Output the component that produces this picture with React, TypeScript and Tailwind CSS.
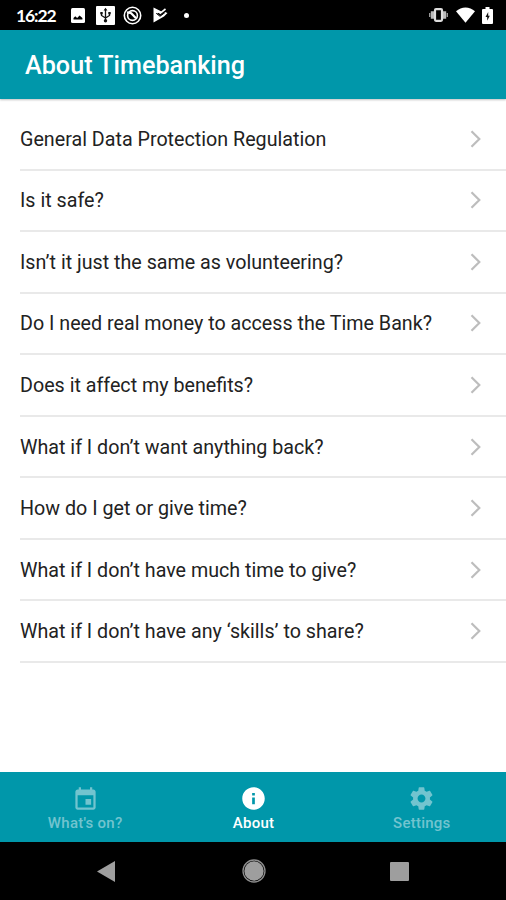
import React from 'react';

const questions = [
  'General Data Protection Regulation',
  'Is it safe?',
  'Isn’t it just the same as volunteering?',
  'Do I need real money to access the Time Bank?',
  'Does it affect my benefits?',
  'What if I don’t want anything back?',
  'How do I get or give time?',
  'What if I don’t have much time to give?',
  'What if I don’t have any ‘skills’ to share?',
];

const tabs = [
  {
    name: "What's on?",
    active: false,
    icon: 'M19 4h-1V2h-2v2H8V2H6v2H5c-1.1 0-2 .9-2 2v14c0 1.1.9 2 2 2h14c1.1 0 2-.9 2-2V6c0-1.1-.9-2-2-2zm0 16H5V9h14v11zM12 12.500h5v5h-5z',
  },
  {
    name: 'About',
    active: true,
    icon: 'M12 2C6.480 2 2 6.480 2 12s4.480 10 10 10 10-4.480 10-10S17.520 2 12 2zm1.200 15h-2.400v-6h2.400v6zm0-7.600h-2.400V7h2.400v2.400z',
  },
  {
    name: 'Settings',
    active: false,
    icon: 'M19.430 12.980c.04-.32.07-.64.07-.98s-.03-.66-.07-.98l2.110-1.650c.19-.15.24-.42.12-.64l-2-3.460c-.12-.22-.39-.3-.61-.22l-2.490 1c-.52-.4-1.080-.73-1.690-.98l-.38-2.650C14.460 2.180 14.250 2 14 2h-4c-.25 0-.46.18-.49.42l-.38 2.650c-.61.25-1.170.59-1.690.98l-2.490-1c-.23-.09-.49 0-.61.22l-2 3.460c-.13.22-.07.49.12.64l2.110 1.650c-.04.32-.07.65-.07.98s.03.66.07.98l-2.110 1.650c-.19.15-.24.42-.12.64l2 3.460c.12.22.39.3.61.22l2.490-1c.52.4 1.080.73 1.690.98l.38 2.650c.03.24.24.42.49.42h4c.25 0 .46-.18.49-.42l.38-2.650c.61-.25 1.170-.59 1.690-.98l2.490 1c.23.09.49 0 .61-.22l2-3.460c.12-.22.07-.49-.12-.64l-2.110-1.650zM12 15.500c-1.930 0-3.500-1.570-3.500-3.500s1.570-3.500 3.500-3.500 3.500 1.570 3.500 3.500-1.570 3.500-3.500 3.500z',
  },
];

const StatusBar = () => (
  <div className="flex h-[30px] shrink-0 items-center justify-between bg-black pr-[13px] pl-4 text-white">
    <div className="flex items-center">
      <span className="w-[55px] pt-px font-['Lato','Liberation_Sans',sans-serif] text-[17.500px] leading-5 font-bold tracking-[-1.100px]">16:22</span>
      {/* Picture */}
      <svg width="14" height="15" viewBox="0 0 14 15">
        <rect width="14" height="15" rx="1.500" fill="#fff" />
        <path d="M2.500 11.500v-1.500l1.800-1.800 1.800 1.800L8.600 7.500l2.800 2.500v1.500z" fill="#000" />
      </svg>
      {/* USB */}
      <svg className="ml-[11px]" width="19" height="19" viewBox="0 0 19 19">
        <rect width="19" height="19" rx="1" fill="#fff" />
        <path d="M9.500 3v11M5.500 7v2.500l4 2.500 4-2.500V7" fill="none" stroke="#111" strokeWidth="1.300" />
        <path d="M9.500 1.800l1.900 2.700H7.600zM4.300 6h2.400v2.200H4.300zM12.300 6h2.400v2.200h-2.400z" fill="#111" />
        <circle cx="9.500" cy="14.700" r="1.700" fill="#111" />
      </svg>
      {/* Do not track */}
      <svg className="ml-2" width="19" height="19" viewBox="0 0 19 19" fill="none" stroke="#fff">
        <circle cx="9.500" cy="9.500" r="8.200" strokeWidth="1.600" />
        <circle cx="9.500" cy="9.500" r="4.900" strokeWidth="1.600" />
        <path d="M4 6.200l4.200 1L13 12.300" strokeWidth="2.200" />
      </svg>
      {/* Play check */}
      <svg className="ml-[11px]" width="15" height="16" viewBox="0 0 15 16">
        <path d="M.5.500v15l10.500-6L14.500 6 12 5 7.300 9 4 6.500l5-1.800z" fill="#fff" />
        <path d="M5 4.200l2.300 1.900L12.500 2" fill="none" stroke="#fff" strokeWidth="1.600" />
        <path d="M3.200 6.300l3.800 3 5-3.800" fill="none" stroke="#000" strokeWidth="1" />
      </svg>
      <span className="ml-4 size-[5px] rounded-full bg-white"></span>
    </div>
    <div className="flex items-center gap-2">
      {/* Vibrate */}
      <svg width="19" height="14" viewBox="0 0 19 14">
        <path d="M.7 5v4M18.300 5v4" stroke="#999" strokeWidth="1.400" />
        <path d="M3.400 3.200v7.600M15.600 3.200v7.600" stroke="#bbb" strokeWidth="3.200" />
        <rect x="6" y="1.200" width="7" height="11.600" rx="1" fill="none" stroke="#ddd" strokeWidth="2.200" />
      </svg>
      <svg width="19" height="16" viewBox="0 0 19 16">
        <path d="M0 4.300C5.500-.8 13.500-.8 19 4.300L9.500 15.800z" fill="#fff" />
      </svg>
      <svg className="-ml-px" width="11" height="17" viewBox="0 0 11 17">
        <path d="M3.500 0h4v2H10a1 1 0 0 1 1 1v13a1 1 0 0 1-1 1H1a1 1 0 0 1-1-1V3a1 1 0 0 1 1-1h2.500z" fill="#fff" />
        <path d="M6.200 5L3.500 10h1.700v3.700L7.800 8.800H6.200z" fill="#111" />
      </svg>
    </div>
  </div>
);

const App = () => {
  return (
    <div className="flex h-[900px] w-[506px] flex-col overflow-hidden bg-white font-['Roboto',sans-serif]">
      <StatusBar />

      <header className="flex h-[69px] shrink-0 items-center bg-[#0097aa] px-[25px] pt-[3px] shadow-[0_1px_2px_rgba(0,0,0,0.25)]">
        <h1 className="text-[25.200px] leading-8 font-medium whitespace-nowrap text-white">About Timebanking</h1>
      </header>

      <main className="flex-1 pt-[10.200px]">
        <ul className="pl-5">
          {questions.map((question) => (
            <li key={question} className="flex h-[61.530px] items-center justify-between border-b-2 border-[#e9e9e9] pr-[25px]">
              <span className="pt-[2px] text-[19.700px] leading-7 whitespace-nowrap text-[#222]">{question}</span>
              <svg width="11" height="18" viewBox="0 0 11 18" fill="none" stroke="#bdbdbd" strokeWidth="2.200">
                <path d="M1.500 1.200L9.300 9l-7.800 7.800" />
              </svg>
            </li>
          ))}
        </ul>
      </main>

      {/* Tab bar */}
      <nav className="grid h-[70px] shrink-0 grid-cols-3 bg-[#0097aa] pl-px">
        {tabs.map((tab) => (
          <button
            key={tab.name}
            className={`flex flex-col items-center pt-[13px] ${tab.active ? 'text-white' : 'text-[#72c4cf]'}`}
          >
            <svg width="27" height="27" viewBox="0 0 24 24" fill="currentColor" fillRule="evenodd">
              <path d={tab.icon} />
            </svg>
            <span className="mt-px text-[15px] leading-5 font-medium tracking-[0.250px]">{tab.name}</span>
          </button>
        ))}
      </nav>

      {/* System navigation */}
      <div className="flex h-[58px] shrink-0 items-center justify-between bg-black px-[97px]">
        <svg width="18" height="21" viewBox="0 0 18 21">
          <path d="M18 0v21L0 10.500z" fill="#9e9e9e" />
        </svg>
        <svg className="ml-0.5" width="24" height="24" viewBox="0 0 24 24">
          <circle cx="12" cy="12" r="11" fill="none" stroke="#8e8e8e" strokeWidth="1.300" />
          <circle cx="12" cy="12" r="9.700" fill="#9e9e9e" />
        </svg>
        <span className="size-[19px] rounded-[1px] bg-[#9e9e9e]"></span>
      </div>
    </div>
  );
};

export default App;
